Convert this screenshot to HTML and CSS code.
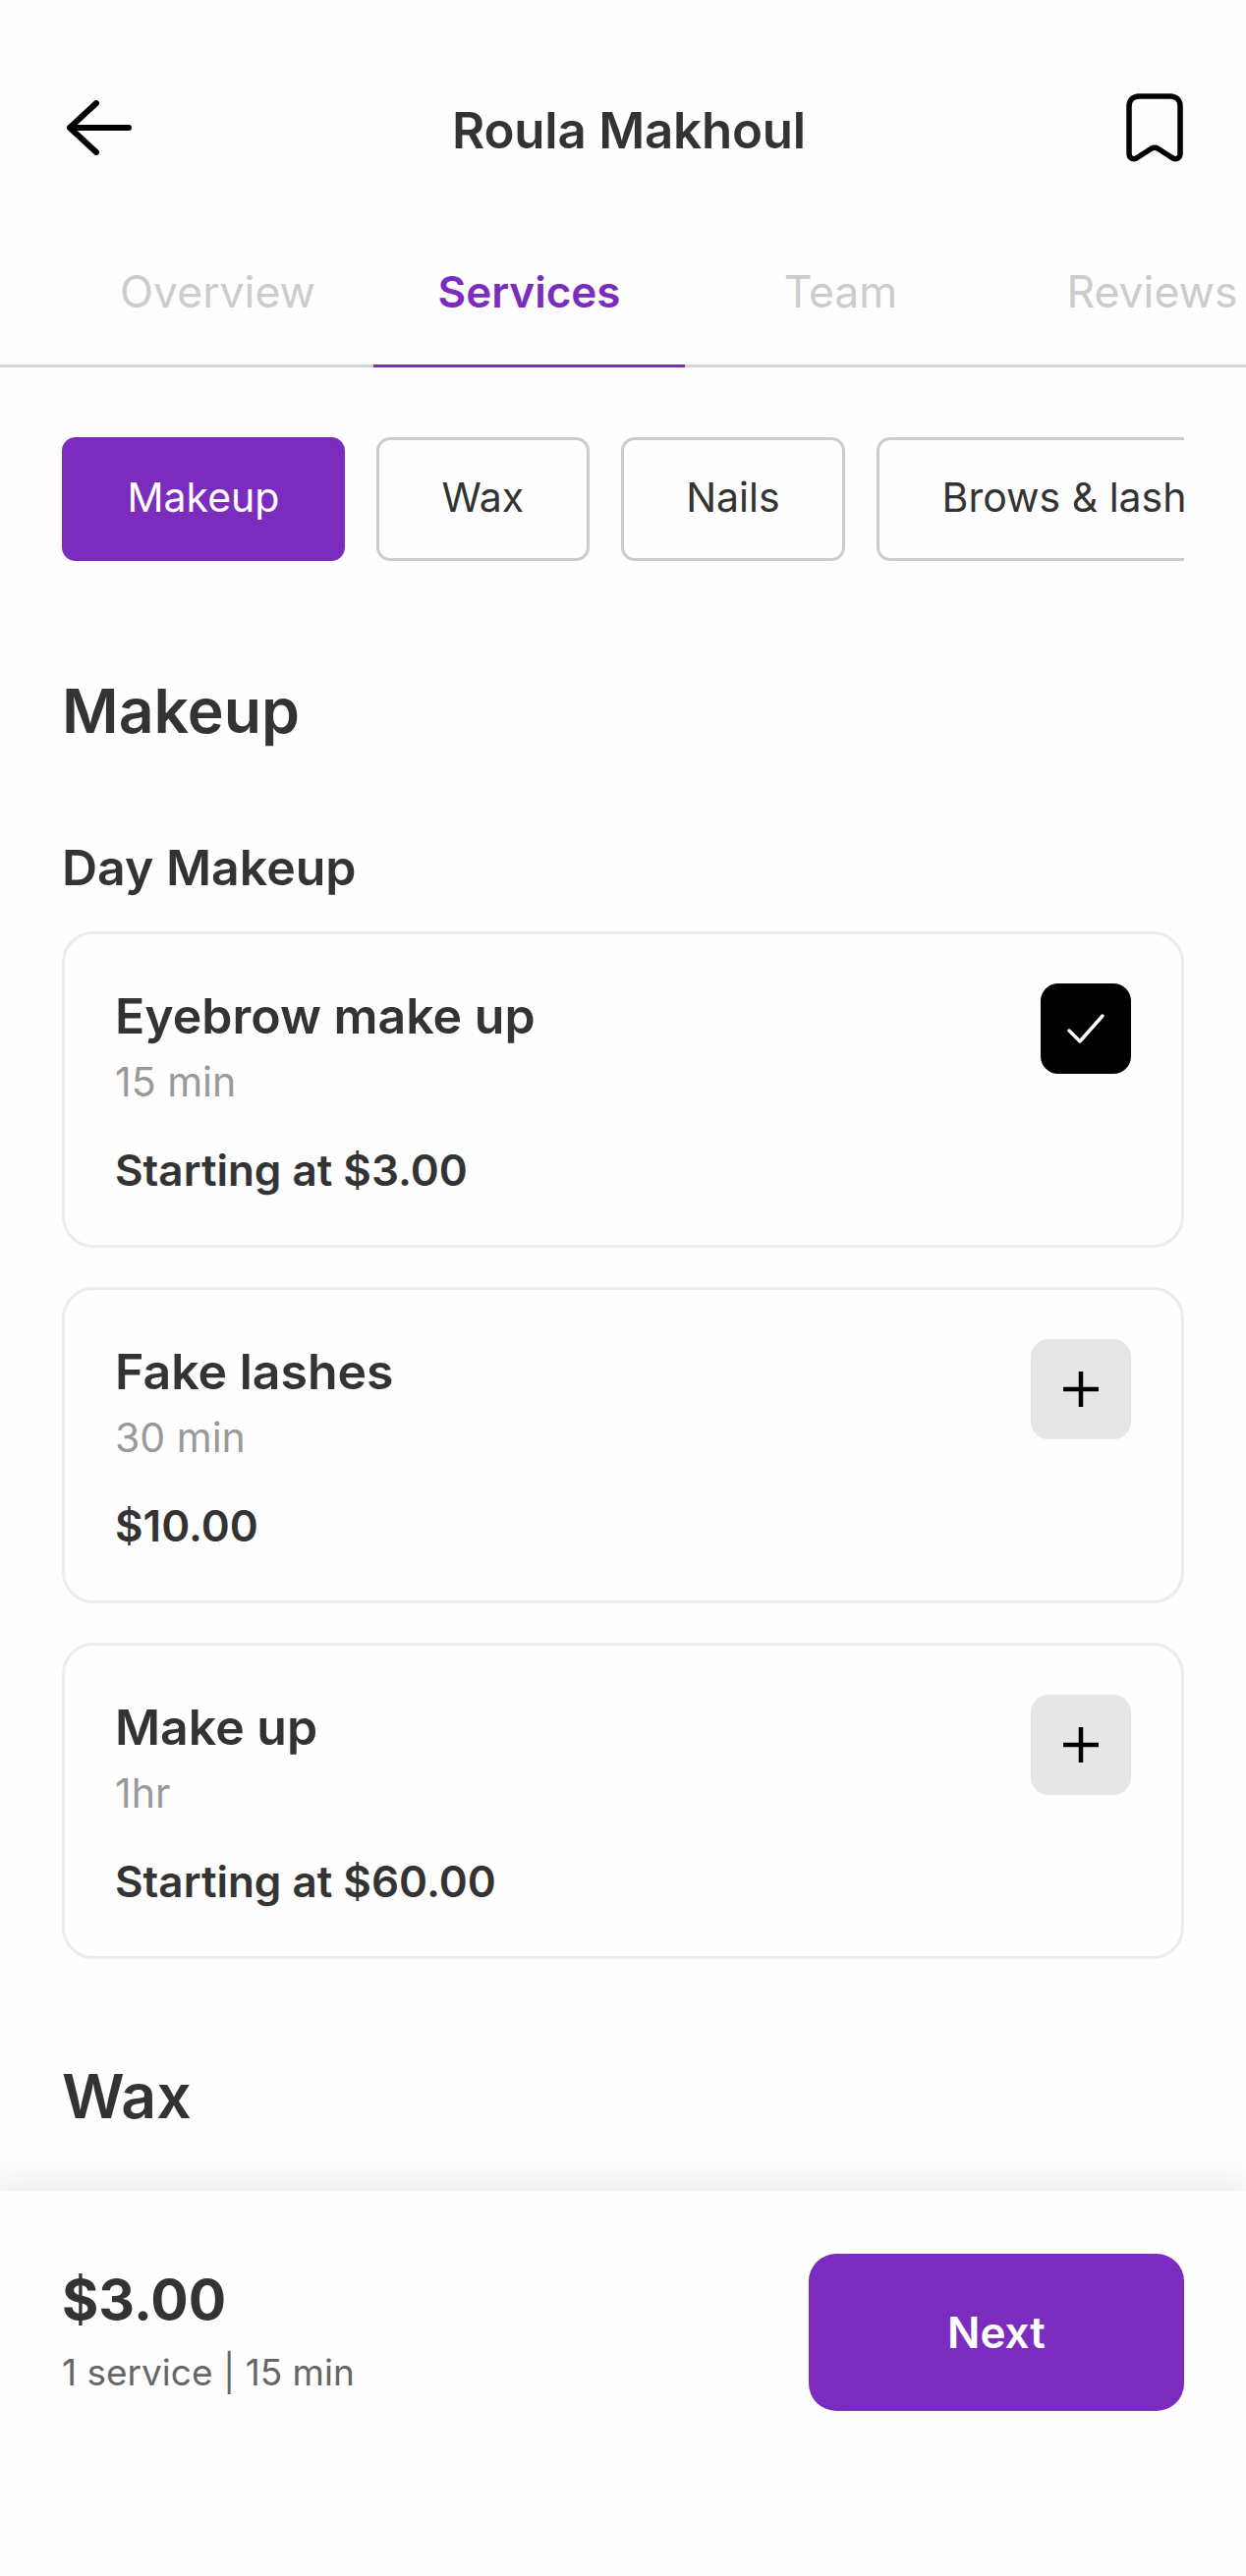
FILE: index.html
```html
<!DOCTYPE html>
<html lang="en">
<head>
<meta charset="utf-8">
<title>Roula Makhoul</title>
<link rel="stylesheet" href="styles.css">
</head>
<body>
<div class="page">
  <main class="content">
    <header class="topbar">
      <svg class="icon-back" width="66" height="56" viewBox="0 0 66 56" fill="none" stroke="#000" stroke-width="6" stroke-linecap="round" stroke-linejoin="round"><path d="M3 28H63M30 3L3 28L30 53"/></svg>
      <h1 class="title">Roula Makhoul</h1>
      <svg class="icon-save" width="58" height="70" viewBox="0 0 58 70" fill="none" stroke="#000" stroke-width="5.5" stroke-linecap="round" stroke-linejoin="round"><path d="M3 13C3 7 7 3 13 3H45C51 3 55 7 55 13V61C55 67 50 68 46 65L32 56C30 55 28 55 26 56L12 65C8 68 3 67 3 61Z"/></svg>
    </header>
    <nav class="tabs">
      <div class="tab">Overview</div>
      <div class="tab active">Services</div>
      <div class="tab">Team</div>
      <div class="tab">Reviews</div>
    </nav>
    <div class="chips">
      <div class="chip selected">Makeup</div>
      <div class="chip">Wax</div>
      <div class="chip">Nails</div>
      <div class="chip">Brows &amp; lashes</div>
    </div>
    <h2 class="section">Makeup</h2>
    <h3 class="subsection">Day Makeup</h3>
    <div class="cards">
      <article class="card">
        <div class="info">
          <div class="name">Eyebrow make up</div>
          <div class="dur">15 min</div>
          <div class="price">Starting at $3.00</div>
        </div>
        <div class="check"><svg width="40" height="32" viewBox="0 0 40 32" fill="none" stroke="#fff" stroke-width="3.5" stroke-linecap="round" stroke-linejoin="round"><path d="M3 18L14 29L37 3"/></svg></div>
      </article>
      <article class="card">
        <div class="info">
          <div class="name">Fake lashes</div>
          <div class="dur">30 min</div>
          <div class="price">$10.00</div>
        </div>
        <div class="add"><svg width="40" height="40" viewBox="0 0 40 40" fill="none" stroke="#000" stroke-width="4.5"><path d="M20 2V38M2 20H38"/></svg></div>
      </article>
      <article class="card">
        <div class="info">
          <div class="name">Make up</div>
          <div class="dur">1hr</div>
          <div class="price">Starting at $60.00</div>
        </div>
        <div class="add"><svg width="40" height="40" viewBox="0 0 40 40" fill="none" stroke="#000" stroke-width="4.5"><path d="M20 2V38M2 20H38"/></svg></div>
      </article>
    </div>
    <h2 class="section section-next">Wax</h2>
  </main>
  <footer class="bottom">
    <div class="summary">
      <div class="total">$3.00</div>
      <div class="meta">1 service | 15 min</div>
    </div>
    <div class="next">Next</div>
  </footer>
</div>
</body>
</html>
```
FILE: styles.css
```css
* { box-sizing: border-box; }
html, body { margin: 0; padding: 0; background: #fefefe; }
body { font-family: Inter, "Liberation Sans", sans-serif; color: #333; }
h1, h2, h3 { margin: 0; }
.page { width: 1268px; height: 2622px; display: flex; flex-direction: column; overflow: hidden; }
.content { flex: 1; min-height: 0; overflow: hidden; }
.topbar { height: 262px; padding: 95px 64px 0 68px; display: flex; justify-content: space-between; align-items: flex-start; }
.icon-back { margin-top: 7px; }
.title { font-size: 51px; font-weight: 600; line-height: 60px; color: #333; margin-top: 8px; letter-spacing: -0.2px; }
.tabs { display: flex; height: 112px; padding-left: 63px; border-bottom: 3px solid #d4d4d4; }
.tab { flex: 0 0 317px; height: 112px; padding-top: 18px; text-align: center; font-size: 44.5px; line-height: 34px; font-weight: 400; color: #ccc; white-space: nowrap; }
.tab.active { color: #7b2cbf; font-weight: 600; font-size: 44px; border-bottom: 3px solid #7b2cbf; }
.chips { margin: 71px 63px 0; display: flex; gap: 32px; overflow: hidden; }
.chip { flex: none; height: 126px; line-height: 116px; padding: 0 63.5px; border: 3px solid #ccc; border-radius: 14px; font-size: 41px; color: #333; background: #fefefe; white-space: nowrap; }
.chip.selected { background: #7b2cbf; border-color: #7b2cbf; color: #fff; }
.section { margin: 112px 63px 0; font-size: 62.5px; line-height: 80px; font-weight: 600; color: #333; }
.subsection { margin: 90px 63px 0; font-size: 50px; line-height: 60px; font-weight: 600; color: #333; }
.cards { margin: 35px 63px 0; display: flex; flex-direction: column; gap: 40px; }
.card { height: 322px; border: 3px solid #ececec; border-radius: 32px; padding: 50px 51px; display: flex; justify-content: space-between; align-items: flex-start; }
.name { font-size: 50px; line-height: 60px; font-weight: 600; color: #333; margin-top: 3px; }
.dur { font-size: 41px; line-height: 48px; color: #999; margin-top: 13px; }
.price { font-size: 44px; line-height: 56px; font-weight: 600; color: #333; margin-top: 38px; }
.check { width: 92px; height: 92px; background: #000; border-radius: 18px; display: flex; align-items: center; justify-content: center; }
.add { width: 102px; height: 102px; background: #e6e6e6; border-radius: 18px; display: flex; align-items: center; justify-content: center; }
.section-next { margin-top: 99px; }
.bottom { flex: none; height: 392px; background: #fefefe; box-shadow: 0 -10px 30px rgba(0,0,0,0.08); padding: 64px 63px 0; display: flex; justify-content: space-between; align-items: flex-start; position: relative; }
.total { font-size: 57px; line-height: 70px; font-weight: 700; color: #333; margin-top: 12px; }
.meta { font-size: 37px; line-height: 50px; color: #666; margin-top: 14px; }
.next { width: 382px; height: 160px; background: #7b2cbf; color: #fff; border-radius: 28px; display: flex; align-items: center; justify-content: center; font-size: 44px; font-weight: 600; }
```
